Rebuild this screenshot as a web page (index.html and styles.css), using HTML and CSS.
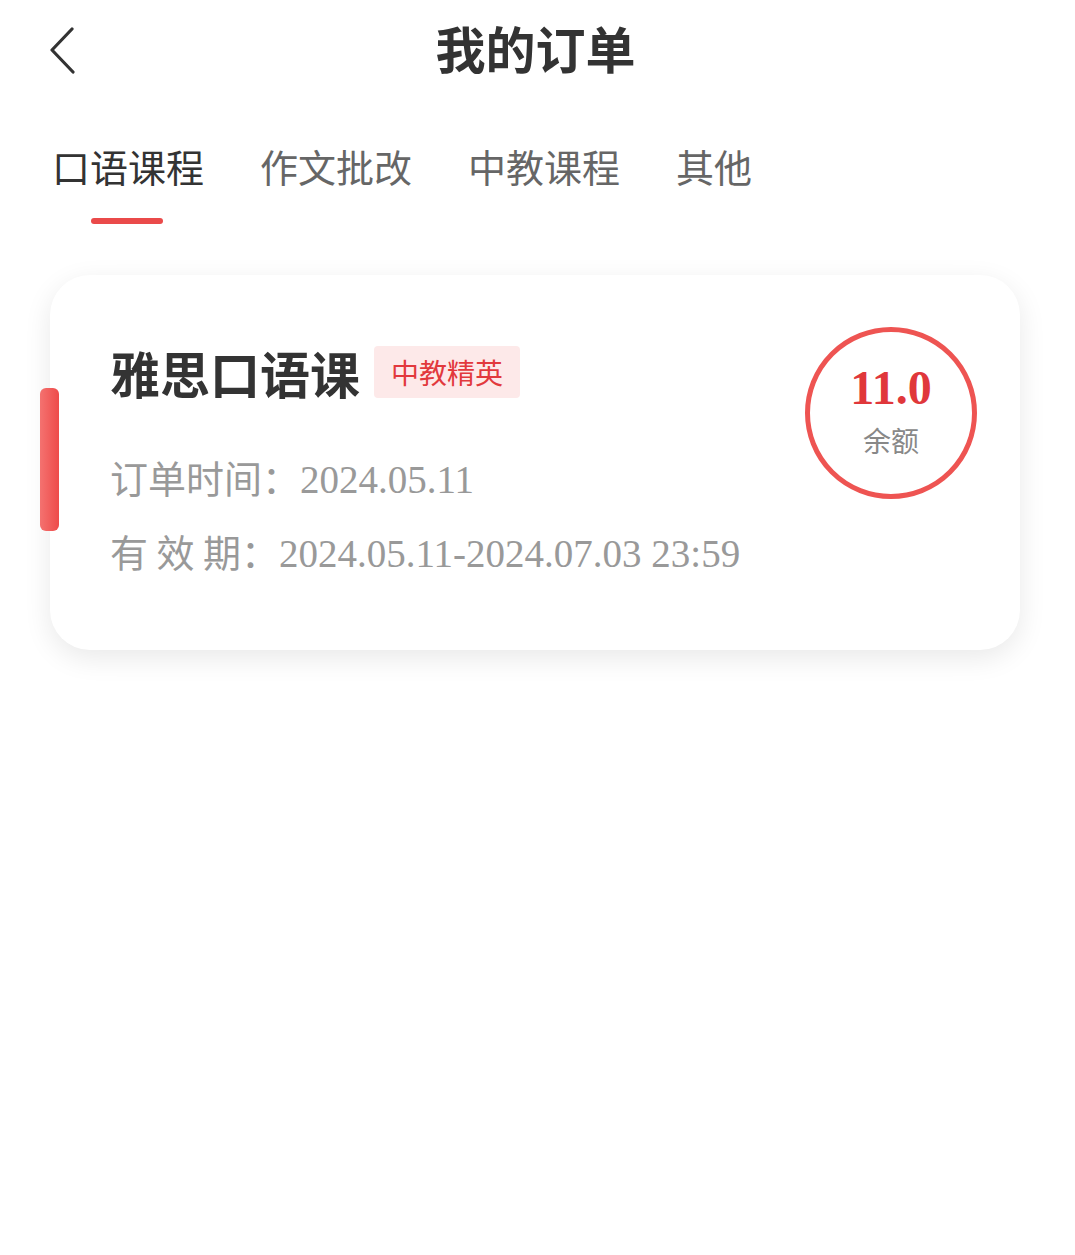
FILE: index.html
```html
<!DOCTYPE html>
<html lang="zh-CN">
  <head>
    <meta charset="UTF-8" />
    <meta name="viewport" content="width=device-width, initial-scale=1.0" />
    <title>我的订单</title>
    <link rel="stylesheet" href="styles.css">
  </head>
  <body>
    <header class="nav">
      <div class="nav-left">
        <svg class="back" width="30" height="48" viewBox="0 0 30 48">
          <path d="M24 3 L4 24 L25 46" fill="none" stroke="#333" stroke-width="3.2" stroke-linecap="round" stroke-linejoin="round" />
        </svg>
      </div>
      <h1 class="nav-title">我的订单</h1>
      <div class="nav-right"></div>
    </header>

    <nav class="tabs">
      <div class="tab active">口语课程</div>
      <div class="tab">作文批改</div>
      <div class="tab">中教课程</div>
      <div class="tab">其他</div>
    </nav>

    <div class="list">
      <div class="card">
        <span class="card-mark"></span>
        <div class="card-info">
          <div class="card-head">
            <span class="card-title">雅思口语课</span>
            <span class="tag">中教精英</span>
          </div>
          <div class="meta">订单时间：<span class="num">2024.05.11</span></div>
          <div class="meta">有 效 期：<span class="num">2024.05.11-2024.07.03 23:59</span></div>
        </div>
        <div class="balance">
          <span class="balance-num">11.0</span>
          <span class="balance-label">余额</span>
        </div>
      </div>
    </div>
  </body>
</html>
```

FILE: styles.css
```css
* {
  margin: 0;
  padding: 0;
  box-sizing: border-box;
}
html,
body {
  min-height: 100%;
}
body {
  background: #fff;
  font-family: "Noto Sans CJK SC", "Noto Sans", sans-serif;
  color: #333;
}
.nav {
  display: grid;
  grid-template-columns: 1fr auto 1fr;
  align-items: center;
  height: 94px;
}
.nav-left {
  padding: 6px 0 0 48px;
  display: flex;
  align-items: center;
}
.back {
  display: block;
}
.nav-title {
  font-size: 50px;
  font-weight: 700;
  line-height: 1;
  color: #333;
  margin-right: 4px;
}
.tabs {
  display: flex;
  gap: 56px;
  padding: 44px 0 0 52px;
}
.tab {
  position: relative;
  font-size: 38px;
  line-height: 56px;
  color: #666;
  padding-bottom: 30px;
}
.tab.active {
  color: #333;
}
.tab.active::after {
  content: "";
  position: absolute;
  left: 50%;
  bottom: 0;
  width: 72px;
  height: 6px;
  margin-left: -37px;
  border-radius: 3px;
  background: #ea4a4a;
}
.list {
  padding: 51px 55px 80px 50px;
}
.card {
  position: relative;
  display: flex;
  justify-content: space-between;
  align-items: flex-start;
  background: #fff;
  border-radius: 40px;
  box-shadow: 0 8px 28px rgba(0, 0, 0, 0.09);
  padding: 52px 43px 61px 60px;
}
.card-mark {
  position: absolute;
  left: -10px;
  top: 113px;
  width: 19px;
  height: 143px;
  border-radius: 6px;
  background: linear-gradient(90deg, #f47270, #ee4b4a);
}
.card-info {
  padding-top: 15px;
}
.card-head {
  display: flex;
  align-items: center;
  gap: 14px;
  height: 60px;
  margin-bottom: 39px;
}
.card-title {
  font-size: 50px;
  font-weight: 700;
  color: #333;
  line-height: 60px;
}
.tag {
  display: inline-block;
  height: 52px;
  line-height: 52px;
  padding: 0 17px;
  font-size: 28px;
  color: #e2393d;
  background: #fde9e9;
  border-radius: 4px;
}
.meta {
  font-size: 38px;
  line-height: 71px;
  color: #999;
  white-space: pre;
}
.num {
  font-family: "Liberation Serif", serif;
  font-size: 39px;
}
.balance {
  width: 172px;
  height: 172px;
  border-radius: 50%;
  border: 5px solid #ee5452;
  display: flex;
  flex-direction: column;
  align-items: center;
  justify-content: center;
  gap: 8px;
}
.balance-num {
  font-family: "Liberation Serif", serif;
  font-weight: 700;
  font-size: 48px;
  line-height: 52px;
  color: #e0373b;
  margin-top: -6px;
}
.balance-label {
  font-size: 28px;
  line-height: 36px;
  color: #888;
}
```
